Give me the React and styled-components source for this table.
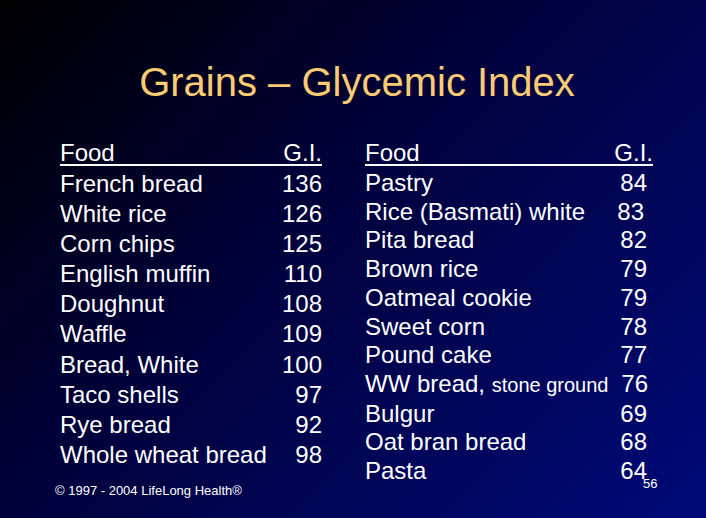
import styled, { createGlobalStyle } from 'styled-components'

const GlobalStyle = createGlobalStyle`
  html, body {
    margin: 0;
    padding: 0;
  }
  body {
    font-family: 'Liberation Sans', Arial, sans-serif;
  }
`

const Slide = styled.div`
  position: relative;
  width: 706px;
  height: 518px;
  overflow: hidden;
  background: linear-gradient(135deg, #000000 0%, #000038 40%, #000a78 100%);
  color: #ffffff;
  font-family: 'Liberation Sans', Arial, sans-serif;
`

const Title = styled.h1`
  margin: 0;
  padding-top: 62px;
  text-align: center;
  padding-left: 8px;
  font-size: 40px;
  line-height: 40px;
  font-weight: normal;
  color: #fbcb74;
`

const Columns = styled.div`
  display: flex;
  align-items: flex-start;
  padding: 40px 0 0 60px;
  gap: 43px;
`

const Table = styled.div`
  display: flex;
  flex-direction: column;
  width: ${props => props.width}px;
`

const HeadRow = styled.div`
  display: flex;
  justify-content: space-between;
  font-size: 24px;
  line-height: 22px;
  border-bottom: 2px solid #ffffff;
`

const Body = styled.div`
  display: flex;
  flex-direction: column;
  padding-top: 3px;
  padding-right: ${props => props.inset || 0}px;
`

const Row = styled.div`
  display: flex;
  justify-content: space-between;
  align-items: baseline;
  font-size: 24px;
  line-height: ${props => props.pitch}px;
  white-space: nowrap;
`

const Small = styled.span`
  font-size: 20px;
`

const Value = styled.span`
  position: relative;
  left: ${props => props.shift || 0}px;
`

const Copyright = styled.div`
  margin-top: 13px;
  margin-left: -5px;
  font-size: 13px;
  line-height: 16px;
`

const PageNumber = styled.div`
  position: absolute;
  left: 643px;
  top: 477px;
  font-size: 13px;
  line-height: 14px;
`

const left = [
  ['French bread', '136'],
  ['White rice', '126'],
  ['Corn chips', '125'],
  ['English muffin', '110'],
  ['Doughnut', '108'],
  ['Waffle', '109'],
  ['Bread, White', '100'],
  ['Taco shells', '97'],
  ['Rye bread', '92'],
  ['Whole wheat bread', '98'],
]

const right = [
  ['Pastry', '84'],
  ['Rice (Basmati) white', '83', -3],
  ['Pita bread', '82'],
  ['Brown rice', '79'],
  ['Oatmeal cookie', '79'],
  ['Sweet corn', '78'],
  ['Pound cake', '77'],
  [<>WW bread, <Small>stone ground</Small></>, '76', 1],
  ['Bulgur', '69'],
  ['Oat bran bread', '68'],
  ['Pasta', '64'],
]

export default function App() {
  return (
    <>
      <GlobalStyle />
      <Slide>
        <Title>Grains – Glycemic Index</Title>
        <Columns>
          <div>
            <Table width={262}>
              <HeadRow>
                <span>Food</span>
                <span>G.I.</span>
              </HeadRow>
              <Body>
                {left.map(([food, gi]) => (
                  <Row key={food} pitch={30.1}>
                    <span>{food}</span>
                    <span>{gi}</span>
                  </Row>
                ))}
              </Body>
            </Table>
            <Copyright>© 1997 - 2004 LifeLong Health®</Copyright>
          </div>
          <Table width={288}>
            <HeadRow>
              <span>Food</span>
              <span>G.I.</span>
            </HeadRow>
            <Body inset={6}>
              {right.map(([food, gi, shift], i) => (
                <Row key={i} pitch={28.7}>
                  <span>{food}</span>
                  <Value shift={shift}>{gi}</Value>
                </Row>
              ))}
            </Body>
          </Table>
        </Columns>
        <PageNumber>56</PageNumber>
      </Slide>
    </>
  )
}
